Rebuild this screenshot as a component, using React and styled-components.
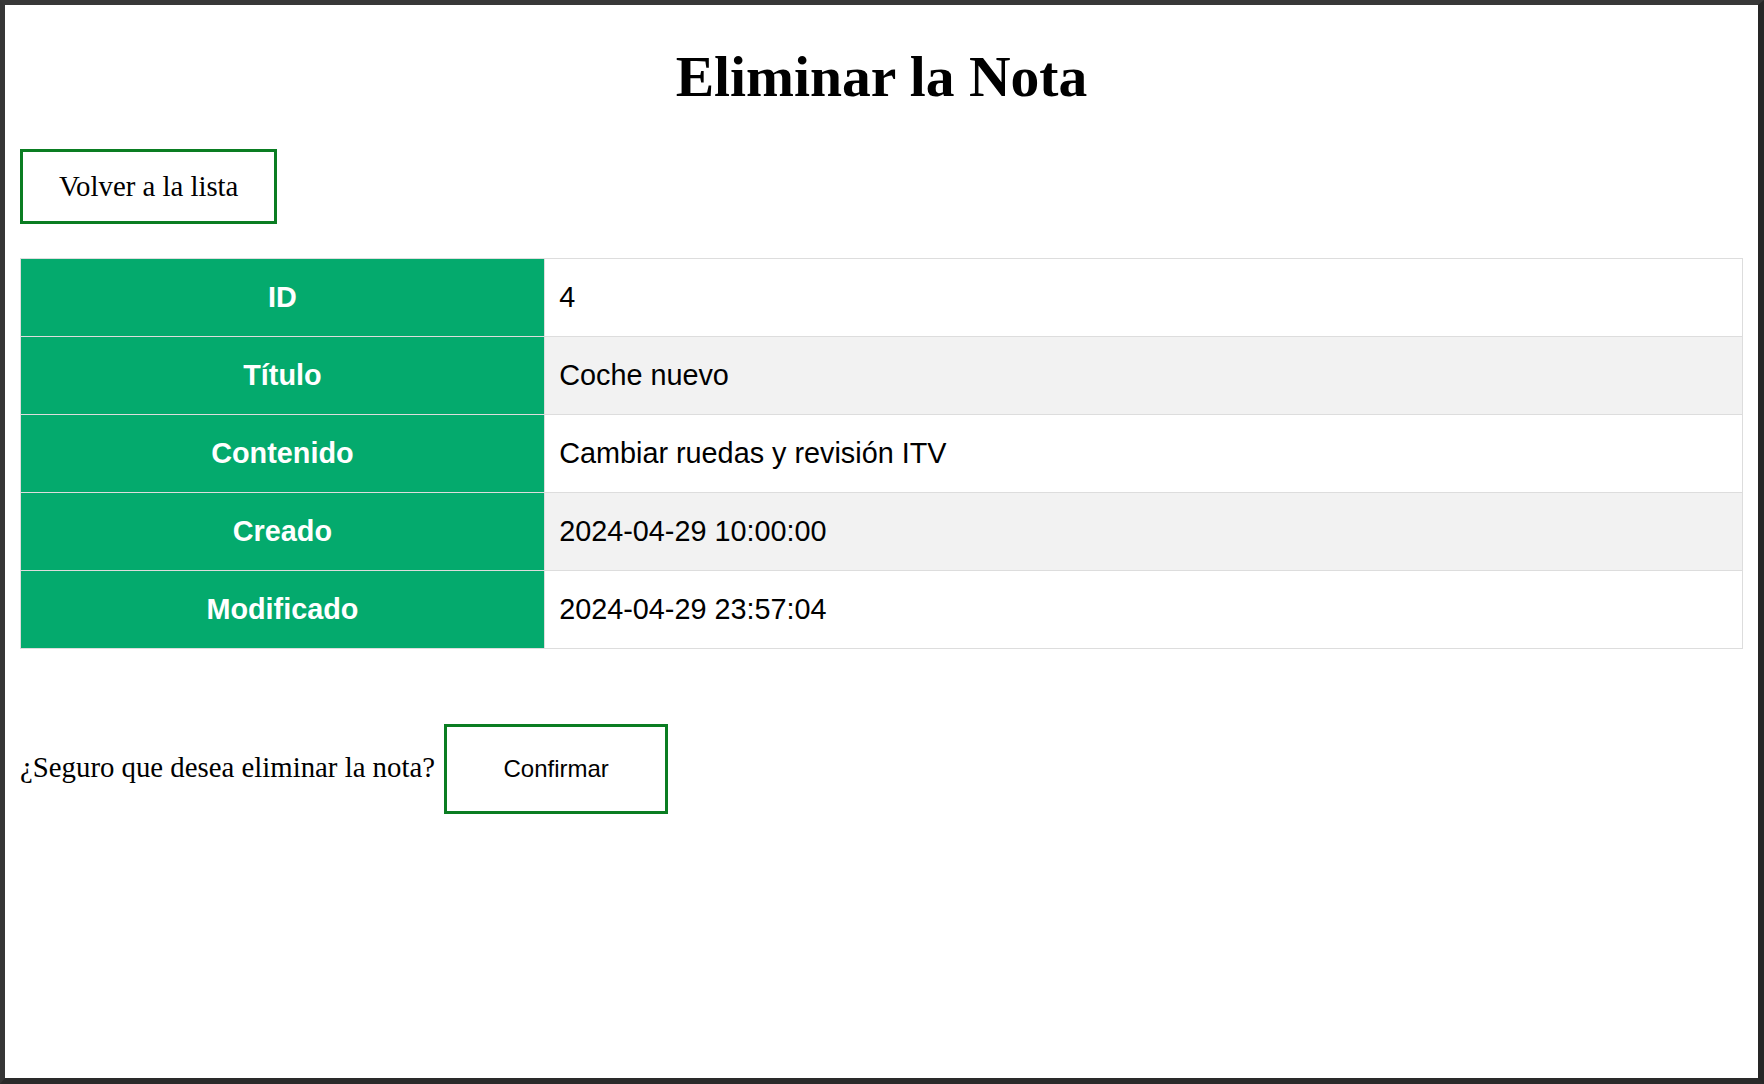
import { styled, createGlobalStyle } from 'styled-components'

const GlobalStyle = createGlobalStyle`
  html, body {
    margin: 0;
    padding: 0;
  }

  body {
    background: #2e2e2e;
    font-family: "Liberation Serif", "Times New Roman", serif;
  }
`

const Marco = styled.div`
  min-height: 100vh;
  box-sizing: border-box;

  border-style: solid;
  border-width: 5px 6px 6px 5px;
  border-color: #383838 #262626 #2a2a2a #363636;

  background: #fff;
  padding: 0 15px 15px;

  display: flow-root;
`

const Titulo = styled.h1`
  font-size: 57.6px;
  font-weight: bold;
  text-align: center;
  color: #000;

  margin: 38.6px 0 40.8px;
`

const Volver = styled.a`
  display: inline-block;

  padding: 18px 36px;
  border: 3px solid #0a7d22;

  font-size: 28.8px;
  color: #000;
  text-decoration: none;

  margin-bottom: 33.6px;
`

const Tabla = styled.table`
  width: 100%;
  border-collapse: collapse;

  font-family: "Liberation Sans", Arial, sans-serif;
  font-size: 28.8px;
`

const Fila = styled.tr`
  background: ${props => (props.$par ? '#f2f2f2' : '#fff')};
`

const Cabecera = styled.th`
  width: 494px;
  padding: 22px 14.4px;
  border: 1.8px solid #ddd;

  background: #04aa6d;
  color: #fff;
  font-weight: bold;
  text-align: center;
`

const Celda = styled.td`
  padding: 22px 14.4px;
  border: 1.8px solid #ddd;

  color: #000;
  text-align: left;
`

const Confirmacion = styled.form`
  display: flex;
  align-items: baseline;
  gap: 9px;

  margin-top: 74.7px;

  font-size: 28.8px;
`

const BotonConfirmar = styled.button`
  padding: 28px 56.5px;
  border: 3px solid #0a7d22;
  background: #fff;

  font-family: "Liberation Sans", Arial, sans-serif;
  font-size: 24px;
  color: #000;

  cursor: pointer;
`

const nota = [
  ['ID', '4'],
  ['Título', 'Coche nuevo'],
  ['Contenido', 'Cambiar ruedas y revisión ITV'],
  ['Creado', '2024-04-29 10:00:00'],
  ['Modificado', '2024-04-29 23:57:04']
]

const App = () => (
  <>
    <GlobalStyle />
    <Marco>
      <Titulo>Eliminar la Nota</Titulo>
      <Volver href="#">Volver a la lista</Volver>
      <Tabla>
        <tbody>
          {nota.map(([campo, valor], i) => (
            <Fila key={campo} $par={i % 2 === 1}>
              <Cabecera>{campo}</Cabecera>
              <Celda>{valor}</Celda>
            </Fila>
          ))}
        </tbody>
      </Tabla>
      <Confirmacion onSubmit={e => e.preventDefault()}>
        <span>¿Seguro que desea eliminar la nota?</span>
        <BotonConfirmar type="submit">Confirmar</BotonConfirmar>
      </Confirmacion>
    </Marco>
  </>
)

export default App
